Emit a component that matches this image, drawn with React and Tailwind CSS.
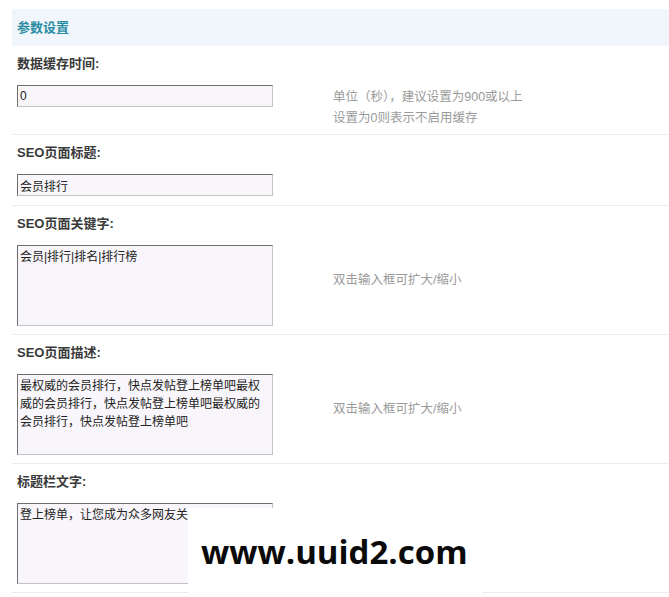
import React from "react";

const FONT = { fontFamily: '"Liberation Sans", "Noto Sans CJK SC", sans-serif' };

const fieldCls =
  "block w-[256px] bg-[#f8f6fa] border border-t-[#6e6e6e] border-l-[#6e6e6e] border-r-[#c4c4c4] border-b-[#c4c4c4] px-[2px] text-[12px] text-[#222] outline-none resize-none";

function Row({ h, label, children, hint, hintPt }) {
  return (
    <div className={`${h} border-b border-[#ebebeb] pt-[11px] pl-[5px]`}>
      <div className="text-[13px] leading-[14px] font-bold text-[#3a3a3a]">{label}</div>
      <div className="mt-[14px] flex items-start">
        {children}
        {hint && (
          <div className={`ml-[60px] ${hintPt} text-[12.5px] leading-[21px] text-[#9a9a9a]`}>
            {hint}
          </div>
        )}
      </div>
    </div>
  );
}

export default function App() {
  return (
    <div className="w-[669px] h-[597px] bg-white overflow-hidden pt-[9px]" style={FONT}>
      <div className="ml-[12px] relative">
        <div className="h-[37px] bg-[#f1f6fc] flex items-center pl-[5px]">
          <span className="text-[13px] font-bold text-[#2a8da3]">参数设置</span>
        </div>

        <Row
          h="h-[89px]"
          label="数据缓存时间:"
          hintPt="pt-[2px]"
          hint={
            <>
              <div>单位（秒），建议设置为900或以上</div>
              <div>设置为0则表示不启用缓存</div>
            </>
          }
        >
          <input readOnly defaultValue="0" className={`${fieldCls} h-[22px]`} style={FONT} />
        </Row>

        <Row h="h-[71px]" label="SEO页面标题:">
          <input readOnly defaultValue="会员排行" className={`${fieldCls} h-[22px]`} style={FONT} />
        </Row>

        <Row h="h-[129px]" label="SEO页面关键字:" hintPt="pt-[25px]" hint="双击输入框可扩大/缩小">
          <textarea
            readOnly
            defaultValue="会员|排行|排名|排行榜"
            className={`${fieldCls} h-[81px] py-[2px] leading-[18px]`}
            style={FONT}
          />
        </Row>

        <Row h="h-[129px]" label="SEO页面描述:" hintPt="pt-[25px]" hint="双击输入框可扩大/缩小">
          <textarea
            readOnly
            defaultValue="最权威的会员排行，快点发帖登上榜单吧最权威的会员排行，快点发帖登上榜单吧最权威的会员排行，快点发帖登上榜单吧"
            className={`${fieldCls} h-[81px] py-[2px] leading-[18px]`}
            style={FONT}
          />
        </Row>

        <Row h="h-[129px]" label="标题栏文字:">
          <textarea
            readOnly
            defaultValue="登上榜单，让您成为众多网友关注的焦点"
            className={`${fieldCls} h-[81px] py-[2px] leading-[18px]`}
            style={FONT}
          />
        </Row>

        <div className="absolute left-[176px] top-[499px] w-[294px] h-[86px] bg-white flex items-center pl-[13px]">
          <span
            className="text-[33px] font-bold text-[#0a0a0a] leading-none"
            style={{ fontFamily: '"Open Sans", "Liberation Sans", sans-serif' }}
          >
            www.uuid2.com
          </span>
        </div>
      </div>
    </div>
  );
}
